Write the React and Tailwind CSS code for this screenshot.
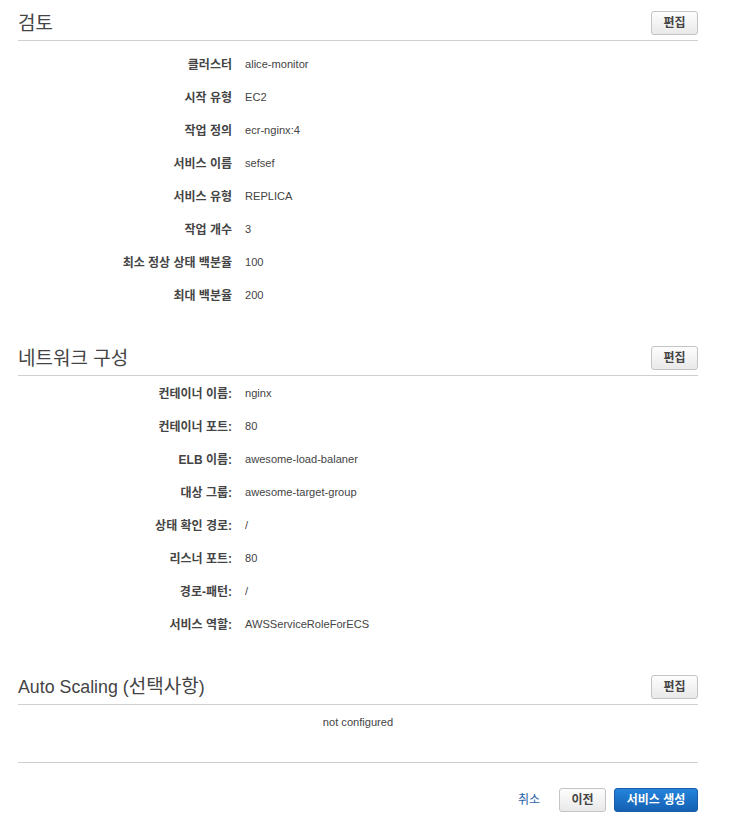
import React from 'react';

const KO = { fontFamily: '"Liberation Sans", "Noto Sans CJK KR", sans-serif' };

const review = [
  ['클러스터', 'alice-monitor'],
  ['시작 유형', 'EC2'],
  ['작업 정의', 'ecr-nginx:4'],
  ['서비스 이름', 'sefsef'],
  ['서비스 유형', 'REPLICA'],
  ['작업 개수', '3'],
  ['최소 정상 상태 백분율', '100'],
  ['최대 백분율', '200'],
];

const network = [
  ['컨테이너 이름:', 'nginx'],
  ['컨테이너 포트:', '80'],
  ['ELB 이름:', 'awesome-load-balaner'],
  ['대상 그룹:', 'awesome-target-group'],
  ['상태 확인 경로:', '/'],
  ['리스너 포트:', '80'],
  ['경로-패턴:', '/'],
  ['서비스 역할:', 'AWSServiceRoleForECS'],
];

const EditButton = () => (
  <button className="mb-[5px] h-[24px] w-[47px] rounded-[3px] border border-[#c4c4c4] bg-gradient-to-b from-[#fdfdfd] to-[#e9e9e9] text-[12px] font-bold text-[#444]">
    편집
  </button>
);

const SectionHeader = ({ children }) => (
  <div className="flex h-[41px] items-end justify-between border-b border-[#cfcfcf]">
    <h2 className="mb-[7px] text-[19px] leading-none text-[#444]">{children}</h2>
    <EditButton />
  </div>
);

const Rows = ({ items }) => (
  <div>
    {items.map(([label, value]) => (
      <div key={label} className="flex h-[33px] items-center">
        <div className="w-[214px] text-right text-[12px] font-bold text-[#444]">{label}</div>
        <div className="pl-[13px] text-[11.1px] text-[#444]">{value}</div>
      </div>
    ))}
  </div>
);

export default function App() {
  return (
    <div className="min-h-[829px] bg-white" style={KO}>
      <div className="ml-[18px] w-[680px]">
        <SectionHeader>검토</SectionHeader>
        <div className="pt-[7px]">
          <Rows items={review} />
        </div>

        <div className="mt-[23px]">
          <SectionHeader>네트워크 구성</SectionHeader>
          <div className="pt-[1px]">
            <Rows items={network} />
          </div>
        </div>

        <div className="mt-[23px]">
          <SectionHeader>
            <span className="text-[17.8px]">Auto Scaling (</span>선택사항<span className="text-[17.8px]">)</span>
          </SectionHeader>
          <div className="flex h-[35px] items-center justify-center text-[11.1px] text-[#444]">
            not configured
          </div>
        </div>

        <div className="mt-[22px] border-t border-[#cfcfcf]" />

        <div className="mt-[25px] flex items-center justify-end">
          <a className="mr-[19px] cursor-pointer text-[12px] text-[#2a63a8]">취소</a>
          <button className="mr-[8px] h-[24px] w-[47px] rounded-[3px] border border-[#c4c4c4] bg-gradient-to-b from-[#fdfdfd] to-[#e9e9e9] text-[12px] font-bold text-[#444]">
            이전
          </button>
          <button className="h-[24px] w-[84px] rounded-[3px] border border-[#1b5ca6] bg-gradient-to-b from-[#2484dc] to-[#1560b3] text-[12px] font-bold text-white">
            서비스 생성
          </button>
        </div>
      </div>
    </div>
  );
}
